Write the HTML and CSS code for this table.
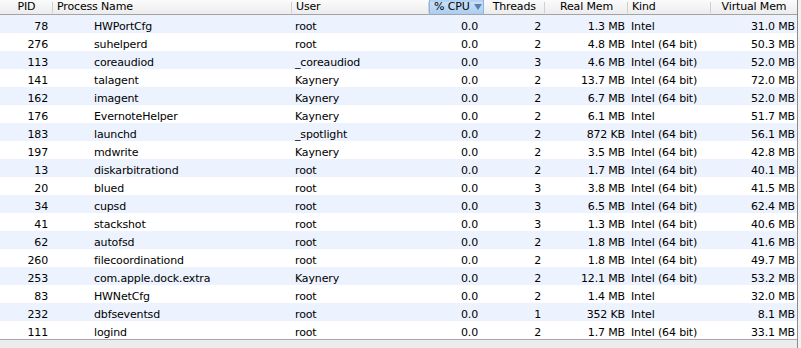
FILE: index.html
```html
<!DOCTYPE html>
<html lang="en">
<head>
    <meta charset="UTF-8">
    <title>Activity Monitor</title>
    <link rel="stylesheet" href="styles.css">
</head>
<body>
    <div class="process-list">
        <table class="process-table">
            <colgroup>
                <col class="col-pid">
                <col class="col-name">
                <col class="col-user">
                <col class="col-cpu">
                <col class="col-threads">
                <col class="col-real">
                <col class="col-kind">
                <col class="col-virtual">
            </colgroup>
            <thead>
                <tr>
                    <th class="num-head">PID</th>
                    <th class="text-head">Process Name</th>
                    <th class="text-head">User</th>
                    <th class="num-head sorted">% CPU <svg class="sort-arrow" width="8" height="6" viewBox="0 0 8 6"><polygon points="0,0 8,0 4,6" fill="#5d7ea6"/></svg></th>
                    <th class="num-head">Threads</th>
                    <th class="num-head">Real Mem</th>
                    <th class="text-head">Kind</th>
                    <th class="num-head last">Virtual Mem</th>
                </tr>
            </thead>
            <tbody>
                <tr><td class="pid">78</td><td class="name">HWPortCfg</td><td class="user">root</td><td class="cpu">0.0</td><td class="threads">2</td><td class="real">1.3 MB</td><td class="kind">Intel</td><td class="virtual">31.0 MB</td></tr>
                <tr><td class="pid">276</td><td class="name">suhelperd</td><td class="user">root</td><td class="cpu">0.0</td><td class="threads">2</td><td class="real">4.8 MB</td><td class="kind">Intel (64 bit)</td><td class="virtual">50.3 MB</td></tr>
                <tr><td class="pid">113</td><td class="name">coreaudiod</td><td class="user">_coreaudiod</td><td class="cpu">0.0</td><td class="threads">3</td><td class="real">4.6 MB</td><td class="kind">Intel (64 bit)</td><td class="virtual">52.0 MB</td></tr>
                <tr><td class="pid">141</td><td class="name">talagent</td><td class="user">Kaynery</td><td class="cpu">0.0</td><td class="threads">2</td><td class="real">13.7 MB</td><td class="kind">Intel (64 bit)</td><td class="virtual">72.0 MB</td></tr>
                <tr><td class="pid">162</td><td class="name">imagent</td><td class="user">Kaynery</td><td class="cpu">0.0</td><td class="threads">2</td><td class="real">6.7 MB</td><td class="kind">Intel (64 bit)</td><td class="virtual">52.0 MB</td></tr>
                <tr><td class="pid">176</td><td class="name">EvernoteHelper</td><td class="user">Kaynery</td><td class="cpu">0.0</td><td class="threads">2</td><td class="real">6.1 MB</td><td class="kind">Intel</td><td class="virtual">51.7 MB</td></tr>
                <tr><td class="pid">183</td><td class="name">launchd</td><td class="user">_spotlight</td><td class="cpu">0.0</td><td class="threads">2</td><td class="real">872 KB</td><td class="kind">Intel (64 bit)</td><td class="virtual">56.1 MB</td></tr>
                <tr><td class="pid">197</td><td class="name">mdwrite</td><td class="user">Kaynery</td><td class="cpu">0.0</td><td class="threads">2</td><td class="real">3.5 MB</td><td class="kind">Intel (64 bit)</td><td class="virtual">42.8 MB</td></tr>
                <tr><td class="pid">13</td><td class="name">diskarbitrationd</td><td class="user">root</td><td class="cpu">0.0</td><td class="threads">2</td><td class="real">1.7 MB</td><td class="kind">Intel (64 bit)</td><td class="virtual">40.1 MB</td></tr>
                <tr><td class="pid">20</td><td class="name">blued</td><td class="user">root</td><td class="cpu">0.0</td><td class="threads">3</td><td class="real">3.8 MB</td><td class="kind">Intel (64 bit)</td><td class="virtual">41.5 MB</td></tr>
                <tr><td class="pid">34</td><td class="name">cupsd</td><td class="user">root</td><td class="cpu">0.0</td><td class="threads">3</td><td class="real">6.5 MB</td><td class="kind">Intel (64 bit)</td><td class="virtual">62.4 MB</td></tr>
                <tr><td class="pid">41</td><td class="name">stackshot</td><td class="user">root</td><td class="cpu">0.0</td><td class="threads">3</td><td class="real">1.3 MB</td><td class="kind">Intel (64 bit)</td><td class="virtual">40.6 MB</td></tr>
                <tr><td class="pid">62</td><td class="name">autofsd</td><td class="user">root</td><td class="cpu">0.0</td><td class="threads">2</td><td class="real">1.8 MB</td><td class="kind">Intel (64 bit)</td><td class="virtual">41.6 MB</td></tr>
                <tr><td class="pid">260</td><td class="name">filecoordinationd</td><td class="user">root</td><td class="cpu">0.0</td><td class="threads">2</td><td class="real">1.8 MB</td><td class="kind">Intel (64 bit)</td><td class="virtual">49.7 MB</td></tr>
                <tr><td class="pid">253</td><td class="name">com.apple.dock.extra</td><td class="user">Kaynery</td><td class="cpu">0.0</td><td class="threads">2</td><td class="real">12.1 MB</td><td class="kind">Intel (64 bit)</td><td class="virtual">53.2 MB</td></tr>
                <tr><td class="pid">83</td><td class="name">HWNetCfg</td><td class="user">root</td><td class="cpu">0.0</td><td class="threads">2</td><td class="real">1.4 MB</td><td class="kind">Intel</td><td class="virtual">32.0 MB</td></tr>
                <tr><td class="pid">232</td><td class="name">dbfseventsd</td><td class="user">root</td><td class="cpu">0.0</td><td class="threads">1</td><td class="real">352 KB</td><td class="kind">Intel</td><td class="virtual">8.1 MB</td></tr>
                <tr><td class="pid">111</td><td class="name">logind</td><td class="user">root</td><td class="cpu">0.0</td><td class="threads">2</td><td class="real">1.7 MB</td><td class="kind">Intel (64 bit)</td><td class="virtual">33.1 MB</td></tr>
            </tbody>
        </table>
        <div class="list-footer"></div>
    </div>
</body>
</html>
```

FILE: styles.css
```css
body {
    margin: 0;
    background-color: #f2f2f2;
    font-family: "DejaVu Sans", sans-serif;
    font-size: 11px;
    letter-spacing: -0.15px;
    color: #000;
}
.process-list {
    width: 797px;
    height: 348px;
    background-color: #fff;
    border-right: 1px solid #8c8c8c;
    display: flex;
    flex-direction: column;
}
.process-table {
    width: 797px;
    table-layout: fixed;
    border-collapse: collapse;
    border-spacing: 0;
}
.col-pid { width: 53px; }
.col-name { width: 239px; }
.col-user { width: 137px; }
.col-cpu { width: 54px; }
.col-threads { width: 62px; }
.col-real { width: 83px; }
.col-kind { width: 83px; }
.col-virtual { width: 86px; }

/* header row */
.process-table thead tr {
    height: 14px;
    background: linear-gradient(#fbfbfb, #ececec);
    border-bottom: 1px solid #a3a3a3;
}
.process-table th {
    font-weight: normal;
    padding: 0;
    line-height: 14px;
    height: 14px;
    white-space: nowrap;
    background-image: linear-gradient(#cfcfcf, #cfcfcf);
    background-size: 1px 11px;
    background-position: right 2px;
    background-repeat: no-repeat;
}
.process-table th.last {
    background-image: none;
}
.process-table .num-head {
    text-align: center;
}
.process-table .text-head {
    text-align: left;
    padding-left: 4px;
}
.process-table th.sorted {
    background-color: #b4d3f3;
    background-image: linear-gradient(#c9e0f8, #a6caf0);
    background-size: auto;
    border-left: 1px solid #8fb3da;
    border-right: 1px solid #8fb3da;
    padding-left: 4px;
}
.sort-arrow {
    vertical-align: 0;
    margin-left: 1px;
}

/* rows */
.process-table tbody tr {
    height: 18px;
}
.process-table tbody tr:nth-child(odd) {
    background-color: #edf3fe;
}
.process-table td {
    padding: 6px 0 0 0;
    line-height: 12px;
    height: 12px;
    white-space: nowrap;
    overflow: hidden;
}
.process-table .pid { text-align: right; padding-right: 5px; }
.process-table .name { padding-left: 41px; }
.process-table .user { padding-left: 3px; }
.process-table .cpu { text-align: right; padding-right: 5px; }
.process-table .threads { text-align: right; padding-right: 4px; }
.process-table .real { text-align: right; padding-right: 3px; }
.process-table .kind { padding-left: 3px; }
.process-table .virtual { text-align: right; padding-right: 2px; }

.list-footer {
    flex: 1;
    background-color: #ececec;
    border-top: 1px solid #a9a9a9;
}
```
